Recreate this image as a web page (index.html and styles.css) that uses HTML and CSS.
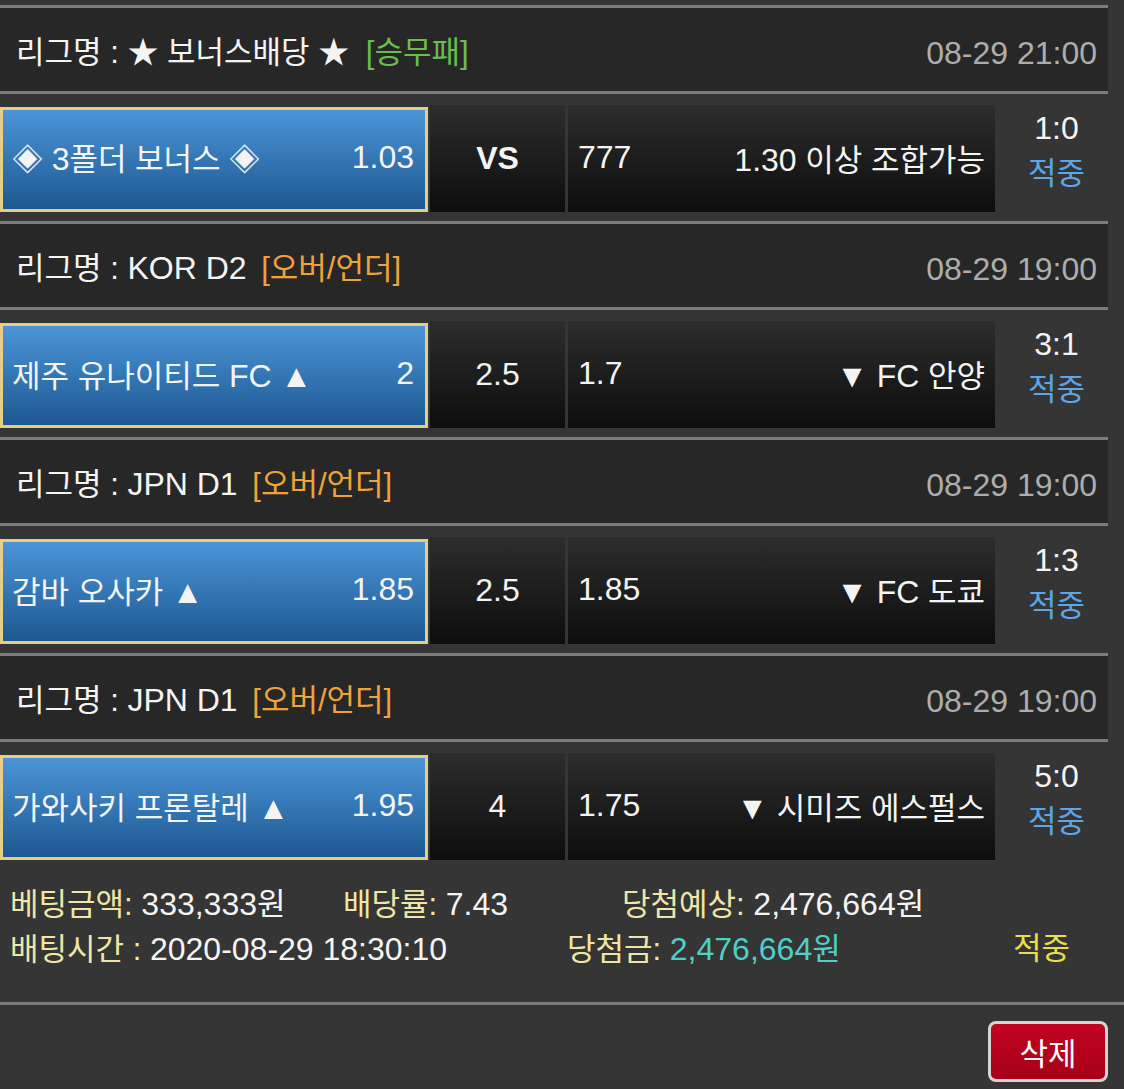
FILE: index.html
```html
<!DOCTYPE html>
<html lang="ko">
<head>
    <meta charset="UTF-8">
    <meta name="viewport" content="width=device-width, initial-scale=1.0">
    <title>배팅내역</title>
    <link rel="stylesheet" href="styles.css">
</head>
<body>
    <div class="slip">
        <!-- 1경기 -->
        <div class="league">
            <div class="league-name">리그명 : ★ 보너스배당 ★ <span class="type type-win">[승무패]</span></div>
            <div class="league-time num">08-29 21:00</div>
        </div>
        <div class="match">
            <div class="pick">
                <span class="team">◈ <span class="num">3</span>폴더 보너스 ◈</span>
                <span class="num">1.03</span>
            </div>
            <div class="cell mid"><b class="num">VS</b></div>
            <div class="cell away">
                <span class="num">777</span>
                <span class="team"><span class="num">1.30</span> 이상 조합가능</span>
            </div>
            <div class="result">
                <div class="num">1:0</div>
                <div class="hit">적중</div>
            </div>
        </div>

        <!-- 2경기 -->
        <div class="league">
            <div class="league-name">리그명 : <span class="num">KOR D2</span> <span class="type type-ou">[오버/언더]</span></div>
            <div class="league-time num">08-29 19:00</div>
        </div>
        <div class="match">
            <div class="pick">
                <span class="team">제주 유나이티드 <span class="num">FC ▲</span></span>
                <span class="num">2</span>
            </div>
            <div class="cell mid"><span class="num">2.5</span></div>
            <div class="cell away">
                <span class="num">1.7</span>
                <span class="team"><span class="num">▼ FC</span> 안양</span>
            </div>
            <div class="result">
                <div class="num">3:1</div>
                <div class="hit">적중</div>
            </div>
        </div>

        <!-- 3경기 -->
        <div class="league">
            <div class="league-name">리그명 : <span class="num">JPN D1</span> <span class="type type-ou">[오버/언더]</span></div>
            <div class="league-time num">08-29 19:00</div>
        </div>
        <div class="match">
            <div class="pick">
                <span class="team">감바 오사카 <span class="num">▲</span></span>
                <span class="num">1.85</span>
            </div>
            <div class="cell mid"><span class="num">2.5</span></div>
            <div class="cell away">
                <span class="num">1.85</span>
                <span class="team"><span class="num">▼ FC</span> 도쿄</span>
            </div>
            <div class="result">
                <div class="num">1:3</div>
                <div class="hit">적중</div>
            </div>
        </div>

        <!-- 4경기 -->
        <div class="league">
            <div class="league-name">리그명 : <span class="num">JPN D1</span> <span class="type type-ou">[오버/언더]</span></div>
            <div class="league-time num">08-29 19:00</div>
        </div>
        <div class="match">
            <div class="pick">
                <span class="team">가와사키 프론탈레 <span class="num">▲</span></span>
                <span class="num">1.95</span>
            </div>
            <div class="cell mid"><span class="num">4</span></div>
            <div class="cell away">
                <span class="num">1.75</span>
                <span class="team"><span class="num">▼</span> 시미즈 에스펄스</span>
            </div>
            <div class="result">
                <div class="num">5:0</div>
                <div class="hit">적중</div>
            </div>
        </div>

        <!-- 합계 -->
        <div class="summary">
            <div class="summary-row">
                <div class="item item-amount"><span class="label">베팅금액:</span> <span class="num">333,333</span>원</div>
                <div class="item item-rate"><span class="label">배당률:</span> <span class="num">7.43</span></div>
                <div class="item"><span class="label">당첨예상:</span> <span class="num">2,476,664</span>원</div>
            </div>
            <div class="summary-row">
                <div class="item item-time"><span class="label">배팅시간 :</span> <span class="num">2020-08-29 18:30:10</span></div>
                <div class="item item-win"><span class="label">당첨금:</span> <span class="prize"><span class="num">2,476,664</span>원</span></div>
                <div class="item status">적중</div>
            </div>
        </div>
    </div>

    <div class="actions">
        <button class="delete-button">삭제</button>
    </div>
</body>
</html>
```

FILE: styles.css
```css
* {
    box-sizing: border-box;
}
body {
    margin: 0;
    padding-top: 5px;
    background-color: #353535;
    color: #f4f4f4;
    font-family: "Liberation Sans", "Noto Sans CJK KR", sans-serif;
    font-size: 31px; /* hangul width */
}
.num {
    font-size: 32px;
}
.league {
    display: flex;
    justify-content: space-between;
    align-items: center;
    height: 89px;
    margin-right: 16px;
    padding: 6px 11px 0 16px;
    background-color: #272727;
    border-top: 3px solid #7c7c7c;
    border-bottom: 3px solid #7c7c7c;
    line-height: 40px;
}
.league-time {
    color: #adadad;
}
.type-win {
    color: #69bd4c;
    margin-left: 8px;
}
.type-ou {
    color: #f0a23a;
    margin-left: 6px;
}
.match {
    display: flex;
    height: 127px;
    margin-right: 16px;
    padding: 11px 0 9px;
}
.pick {
    display: flex;
    justify-content: space-between;
    align-items: center;
    width: 428px;
    margin-top: 2px;
    padding: 0 11px 4px 9px;
    background: linear-gradient(#4b95d8, #1d5891);
    border: 3px solid #e5cf88;
}
.cell {
    display: flex;
    align-items: center;
    background: linear-gradient(#2d2d2d, #0d0d0d);
}
.mid {
    justify-content: center;
    width: 135px;
    margin-left: 2px;
}
.mid b {
    font-weight: bold;
}
.away {
    justify-content: space-between;
    width: 427px;
    margin-left: 3px;
    padding: 0 10px 2px;
}
.result {
    flex: 1;
    padding-left: 10px;
    text-align: center;
    line-height: 46px;
}
.hit {
    color: #5aa6e6;
}
.summary {
    padding: 13px 0 30px 10px;
    border-bottom: 3px solid #7c7c7c;
}
.summary-row {
    display: flex;
    line-height: 44px;
}
.item-amount {
    width: 333px;
}
.item-rate {
    width: 279px;
}
.item-time {
    width: 557px;
}
.item-win {
    width: 446px;
}
.label {
    color: #efe6a8;
}
.prize {
    color: #4fcfc7;
}
.status {
    color: #e8dd4c;
}
.actions {
    display: flex;
    justify-content: flex-end;
    padding: 16px 16px 0 0;
}
.delete-button {
    width: 120px;
    height: 61px;
    font-family: "Liberation Sans", "Noto Sans CJK KR", sans-serif;
    font-size: 31px;
    color: white;
    background: linear-gradient(#c2041f, #a70019);
    border: 3px solid #d9d4d4;
    border-radius: 8px;
    cursor: pointer;
}
```
